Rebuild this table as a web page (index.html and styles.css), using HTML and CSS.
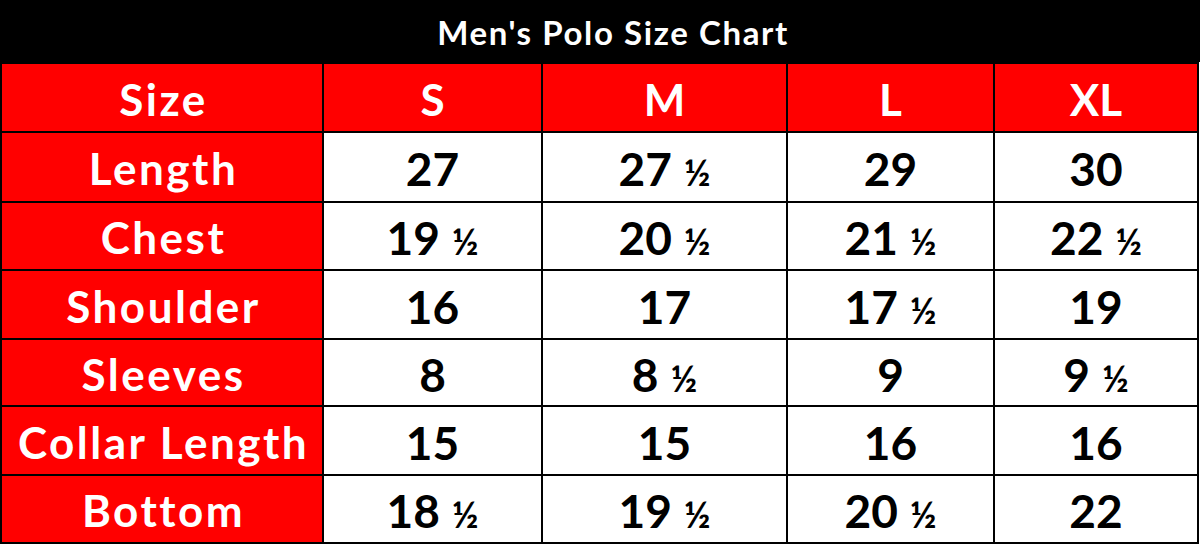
FILE: index.html
```html
<!DOCTYPE html>
<html lang="en">
<head>
<meta charset="utf-8">
<title>Men's Polo Size Chart</title>
<link rel="stylesheet" href="styles.css">
</head>
<body>
<div class="title">Men's Polo Size Chart</div>
<table class="chart">
  <colgroup>
    <col class="c-label">
    <col class="c-s">
    <col class="c-m">
    <col class="c-l">
    <col class="c-xl">
  </colgroup>
  <thead>
    <tr class="r-head">
      <th class="lab">Size</th><th>S</th><th>M</th><th>L</th><th>XL</th>
    </tr>
  </thead>
  <tbody>
    <tr class="r1">
      <th class="lab">Length</th><td>27</td><td>27 <span class="half">½</span></td><td>29</td><td>30</td>
    </tr>
    <tr class="r2">
      <th class="lab">Chest</th><td>19 <span class="half">½</span></td><td>20 <span class="half">½</span></td><td>21 <span class="half">½</span></td><td>22 <span class="half">½</span></td>
    </tr>
    <tr class="r3">
      <th class="lab">Shoulder</th><td>16</td><td>17</td><td>17 <span class="half">½</span></td><td>19</td>
    </tr>
    <tr class="r4">
      <th class="lab">Sleeves</th><td>8</td><td>8 <span class="half">½</span></td><td>9</td><td>9 <span class="half">½</span></td>
    </tr>
    <tr class="r5">
      <th class="lab">Collar Length</th><td>15</td><td>15</td><td>16</td><td>16</td>
    </tr>
    <tr class="r6">
      <th class="lab">Bottom</th><td>18 <span class="half">½</span></td><td>19 <span class="half">½</span></td><td>20 <span class="half">½</span></td><td>22</td>
    </tr>
  </tbody>
</table>
</body>
</html>
```

FILE: styles.css
```css
html, body {
  margin: 0;
  padding: 0;
  background: #ffffff;
}

body {
  width: 1200px;
  height: 544px;
  overflow: hidden;
  font-family: Lato, "Liberation Sans", sans-serif;
  font-weight: 700;
}

.title {
  height: 62px;
  background: #000000;
  color: #ffffff;
  font-size: 33px;
  letter-spacing: 1.6px;
  line-height: 64px;
  text-align: center;
  padding-left: 26px;
  box-sizing: border-box;
}

.chart {
  width: 1197px;
  border-collapse: collapse;
  table-layout: fixed;
  border: 2px solid #000000;
}

.c-label { width: 322px; }
.c-s { width: 219px; }
.c-m { width: 245px; }
.c-l { width: 207px; }
.c-xl { width: 204px; }

.chart th,
.chart td {
  border: 2px solid #000000;
  padding: 0;
  text-align: center;
  vertical-align: middle;
  line-height: 1;
  font-weight: 700;
}

.chart td {
  background: #ffffff;
  color: #000000;
  font-size: 46px;
  padding-top: 4px;
}

.chart th {
  background: #ff0000;
  color: #ffffff;
  font-size: 44px;
  padding-top: 2px;
}

.chart th.lab {
  letter-spacing: 2.5px;
  padding-left: 3px;
}

.half {
  font-size: 36px;
  margin-left: 1px;
}

.r-head { height: 69px; }
.r1 { height: 70px; }
.r2 { height: 68px; }
.r3 { height: 69px; }
.r4 { height: 67px; }
.r5 { height: 69px; }
.r6 { height: 68px; }
```
